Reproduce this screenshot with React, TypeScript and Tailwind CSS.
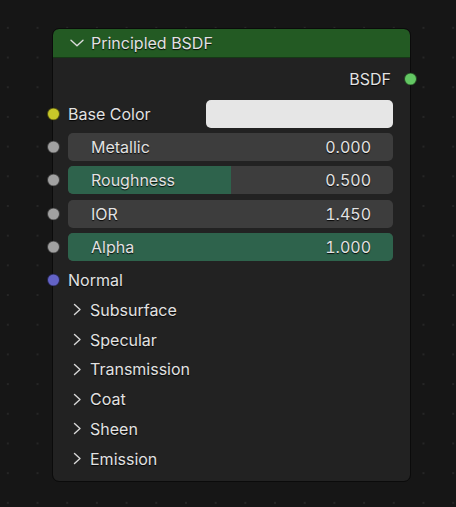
const font = { fontFamily: "Inter, 'Noto Sans', sans-serif" };

function Socket({ color }: { color: string }) {
  return (
    <span
      className={`absolute -left-[6px] top-1/2 -translate-y-1/2 w-[13px] h-[13px] rounded-full border border-black/60 ${color}`}
    />
  );
}

function Field({ label, value, fill }: { label: string; value: string; fill?: number }) {
  return (
    <div className="relative h-[28px] flex items-center">
      <Socket color="bg-[#a1a1a1]" />
      <div className="relative ml-[15px] mr-[17px] flex-1 h-full rounded-[5px] bg-[#3d3d3d] overflow-hidden">
        {fill !== undefined && (
          <div className="absolute inset-y-0 left-0 bg-[#2e634c]" style={{ width: `${fill * 100}%` }} />
        )}
        <div className="relative h-full flex items-center justify-between pl-[23px] pr-[22px]">
          <span>{label}</span>
          <span className="tabular-nums">{value}</span>
        </div>
      </div>
    </div>
  );
}

function Panel({ label }: { label: string }) {
  return (
    <div className="h-[29.8px] flex items-center pl-[20px] gap-[8px]">
      <svg width="9" height="13" viewBox="0 0 9 13" fill="none">
        <path d="M1.5 1.5 L7 6.5 L1.5 11.5" stroke="#d8d8d8" strokeWidth="1.4" strokeLinecap="round" strokeLinejoin="round" />
      </svg>
      <span>{label}</span>
    </div>
  );
}

export default function App() {
  return (
    <div
      className="w-[456px] h-[507px] overflow-hidden bg-[#161616] bg-[radial-gradient(circle,#262626_0.9px,transparent_1.1px)] bg-[length:29.7px_29.7px] bg-[position:-7px_13px] pt-[29px] pl-[53px]"
      style={font}
    >
      <div className="relative w-[357px] h-[452px] rounded-[6px] bg-[#222222] outline outline-1 outline-[#0b0b0b] text-[16px] text-[#e2e2e2] [text-shadow:0_1px_1px_rgba(0,0,0,0.9)]">
        <div className="h-[29px] rounded-t-[6px] bg-[#235a23] border-b border-[#163816] flex items-center pl-[17px] gap-[7px]">
          <svg width="14" height="8" viewBox="0 0 14 8" fill="none">
            <path d="M1 1.2 L7 6.8 L13 1.2" stroke="#dcdcdc" strokeWidth="1.4" strokeLinecap="round" strokeLinejoin="round" />
          </svg>
          <span>Principled BSDF</span>
        </div>

        <div className="pt-[7px] flex flex-col">
          <div className="relative h-[28px] flex items-center justify-end pr-[19px]">
            <span>BSDF</span>
            <span className="absolute -right-[7px] top-1/2 -translate-y-1/2 w-[13px] h-[13px] rounded-full border border-black/60 bg-[#63c763]" />
          </div>

          <div className="relative h-[28px] mt-[7px] flex items-center">
            <Socket color="bg-[#c7c729]" />
            <span className="pl-[15px] flex-1">Base Color</span>
            <div className="w-[187px] h-full mr-[17px] rounded-[5px] bg-[#e6e6e6]" />
          </div>

          <div className="mt-[5px] flex flex-col gap-[5.3px]">
            <Field label="Metallic" value="0.000" />
            <Field label="Roughness" value="0.500" fill={0.5} />
            <Field label="IOR" value="1.450" />
            <Field label="Alpha" value="1.000" fill={1} />
          </div>

          <div className="relative h-[28px] mt-[5px] flex items-center">
            <Socket color="bg-[#6363c7]" />
            <span className="pl-[15px]">Normal</span>
          </div>

          <div className="mt-[1px] flex flex-col">
            <Panel label="Subsurface" />
            <Panel label="Specular" />
            <Panel label="Transmission" />
            <Panel label="Coat" />
            <Panel label="Sheen" />
            <Panel label="Emission" />
          </div>
        </div>
      </div>
    </div>
  );
}
